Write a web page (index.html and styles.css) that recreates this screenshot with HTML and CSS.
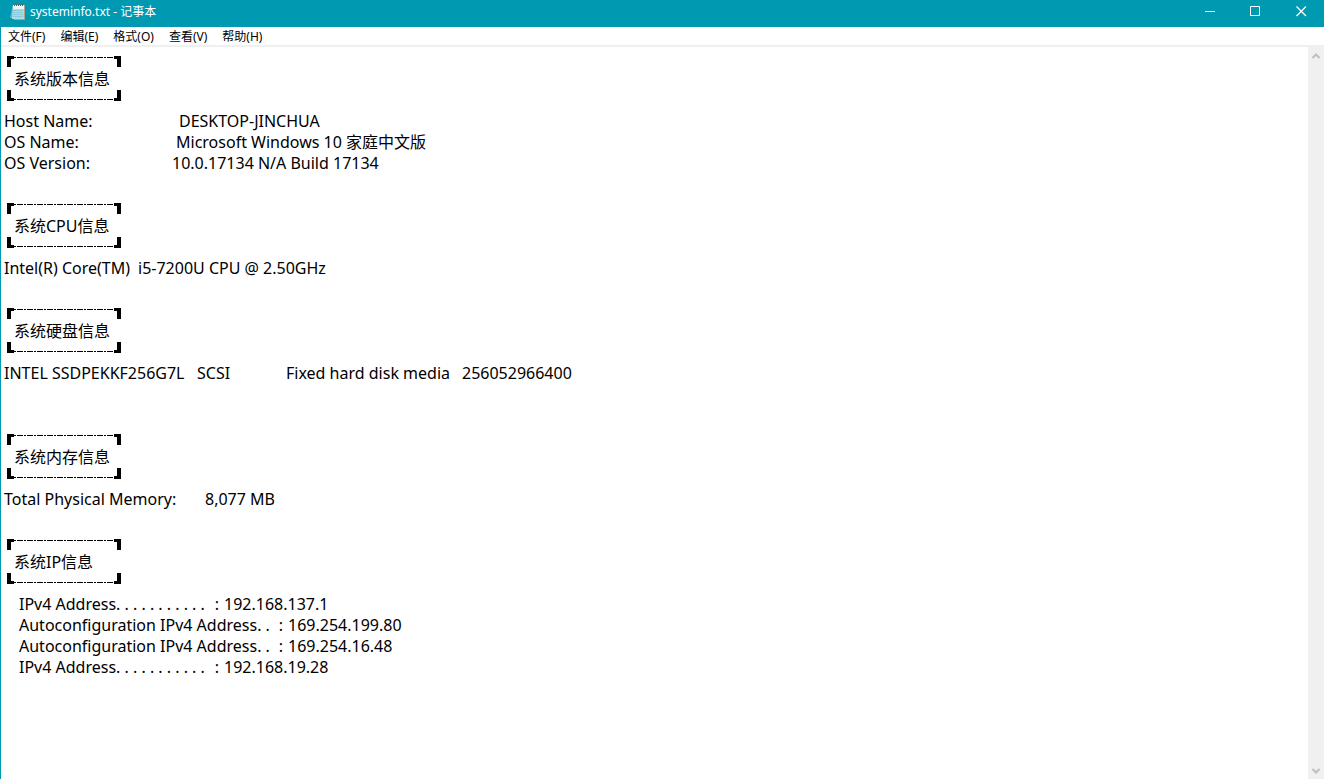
FILE: index.html
```html
<!DOCTYPE html>
<html lang="zh-CN">
<head>
    <meta charset="UTF-8">
    <meta name="viewport" content="width=device-width, initial-scale=1.0">
    <title>systeminfo.txt - 记事本</title>
    <link rel="stylesheet" href="styles.css">
</head>
<body>

    <svg width="0" height="0" class="defs" aria-hidden="true">
        <symbol id="edge" viewBox="0 0 114 11">
            <path d="M0 0h7v3h-3v8h-4zM107 0h7v11h-4v-8h-3z"/>
            <path d="M7 1.5h100" stroke="#000" stroke-dasharray="2 1 6 1" fill="none"/>
        </symbol>
    </svg>

    <div class="window">
        <header class="titlebar">
            <svg class="app-icon" width="18" height="18" viewBox="0 0 18 18" aria-hidden="true">
                <path d="M4 1L1 15h6z" fill="#5fb9cc"/>
                <path d="M15 2h1v15H5v-1h10z" fill="#b3a382"/>
                <path d="M4 2h11v14H3z" fill="#a9dbe9"/>
                <path d="M4 2h11v4H4z" fill="#e9f6fa"/>
                <path d="M4 7.500h10M4 9.500h10M4 11.500h10M4 13.500h10" stroke="#8cc9da"/>
                <path d="M5.500 1v2M7.500 1v2M9.500 1v2M11.500 1v2M13.500 1v2" stroke="#4d6a72"/>
            </svg>
            <h1 class="title">systeminfo.txt - 记事本</h1>
            <div class="controls">
                <button type="button" aria-label="最小化">
                    <svg width="11" height="11" viewBox="0 0 11 11"><path d="M1 5.5h10"/></svg>
                </button>
                <button type="button" aria-label="最大化">
                    <svg width="11" height="11" viewBox="0 0 11 11"><path d="M.5.5h9v9h-9z"/></svg>
                </button>
                <button type="button" aria-label="关闭">
                    <svg width="11" height="11" viewBox="0 0 11 11"><path d="M.5.5l9.500 9.500M10 .5L.5 10" stroke-width="1.300"/></svg>
                </button>
            </div>
        </header>

        <nav class="menu">
            <button type="button">文件(F)</button>
            <button type="button">编辑(E)</button>
            <button type="button">格式(O)</button>
            <button type="button">查看(V)</button>
            <button type="button">帮助(H)</button>
        </nav>

        <div class="editor">
            <main class="text" role="textbox" aria-multiline="true" aria-label="文本编辑器" contenteditable="true" spellcheck="false">
                <section>
                    <div class="frame"><svg><use href="#edge"/></svg><h2>系统版本信息</h2><svg class="bottom"><use href="#edge"/></svg></div>
                    <p><span class="host">Host Name:</span>DESKTOP-JINCHUA</p>
                    <p><span class="os">OS Name:</span>Microsoft Windows 10 家庭中文版</p>
                    <p><span class="version">OS Version:</span>10.0.17134 N/A Build 17134</p>
                </section>
                <section>
                    <div class="frame"><svg><use href="#edge"/></svg><h2>系统CPU信息</h2><svg class="bottom"><use href="#edge"/></svg></div>
                    <p><span class="cpu">Intel(R) Core(TM)</span>i5-7200U CPU @ 2.50GHz</p>
                </section>
                <section class="disk">
                    <div class="frame"><svg><use href="#edge"/></svg><h2>系统硬盘信息</h2><svg class="bottom"><use href="#edge"/></svg></div>
                    <p><span class="model">INTEL SSDPEKKF256G7L</span><span class="bus">SCSI</span><span class="media">Fixed hard disk media</span>256052966400</p>
                </section>
                <section>
                    <div class="frame"><svg><use href="#edge"/></svg><h2>系统内存信息</h2><svg class="bottom"><use href="#edge"/></svg></div>
                    <p><span class="memory">Total Physical Memory:</span>8,077 MB</p>
                </section>
                <section>
                    <div class="frame"><svg><use href="#edge"/></svg><h2>系统IP信息</h2><svg class="bottom"><use href="#edge"/></svg></div>
                    <p class="ip"><span class="ipv4">IPv4 Address. . . . . . . . . . . <span>:</span></span>192.168.137.1</p>
                    <p class="ip"><span class="auto">Autoconfiguration IPv4 Address. . <span>:</span></span>169.254.199.80</p>
                    <p class="ip"><span class="auto">Autoconfiguration IPv4 Address. . <span>:</span></span>169.254.16.48</p>
                    <p class="ip"><span class="ipv4">IPv4 Address. . . . . . . . . . . <span>:</span></span>192.168.19.28</p>
                </section>
            </main>
            <div class="scrollbar">
                <button type="button" aria-label="向上滚动">
                    <svg width="8" height="6" viewBox="0 0 8 6"><path d="M.5 5L4 1.500 7.500 5"/></svg>
                </button>
                <button type="button" aria-label="向下滚动">
                    <svg width="8" height="6" viewBox="0 0 8 6"><path d="M.5 1L4 4.500 7.500 1"/></svg>
                </button>
            </div>
        </div>
    </div>

</body>
</html>
```

FILE: styles.css
```css
* {
    box-sizing: border-box;
}
body {
    margin: 0;
    font-family: "Noto Sans", "Noto Sans CJK SC", sans-serif;
    color: #000;
}
button {
    padding: 0;
    border: none;
    background: none;
    font-family: inherit;
}
.defs {
    position: absolute;
}
.window {
    display: flex;
    flex-direction: column;
    min-height: 100vh;
    border-left: 1px solid #0099b2;
    background-color: #fff;
}
.titlebar {
    display: flex;
    align-items: center;
    height: 27px;
    padding: 0 0 4px 8px;
    background-color: #0099b2;
    color: #fff;
}
.title {
    flex: 1;
    margin: 0 0 0 3px;
    font-size: 12px;
    font-weight: normal;
    line-height: 18px;
}
.controls {
    display: flex;
}
.controls button {
    display: flex;
    align-items: center;
    justify-content: center;
    width: 46px;
    height: 23px;
}
.controls path {
    fill: none;
    stroke: #fff;
}
.menu {
    display: flex;
    gap: 15px;
    height: 20px;
    padding: 0 7px;
    border-bottom: 2px solid #f0f0f0;
}
.menu button {
    font-size: 12px;
    line-height: 20px;
}
.editor {
    display: flex;
    flex: 1;
}
.text {
    flex: 1;
    padding: 1px 3px;
    font-size: 16px;
    line-height: 21px;
    outline: none;
}
.text section {
    margin-bottom: 21px;
}
.text .disk {
    margin-bottom: 42px;
}
.text p {
    display: flex;
    margin: 0;
    white-space: pre;
}
.text .ip {
    padding-left: 15px;
}

.host {
    width: 175px;
}
.os {
    width: 172px;
}
.version {
    width: 168px;
}
.cpu {
    width: 134px;
}
.model {
    width: 193px;
}
.bus {
    width: 89px;
}
.media {
    width: 176px;
}
.memory {
    width: 201px;
}
.ipv4, .auto {
    display: flex;
    justify-content: space-between;
    padding-right: 5px;
}
.ipv4 {
    width: 205px;
}
.auto {
    width: 269px;
}

.frame {
    display: flex;
    flex-direction: column;
    height: 63px;
    padding: 8px 3px 10px;
}
.frame svg {
    width: 114px;
    height: 11px;
}
.frame .bottom {
    transform: scaleY(-1);
}
.frame h2 {
    margin: 2px 7px 0;
    font-size: 16px;
    font-weight: normal;
    line-height: 21px;
}
.scrollbar {
    display: flex;
    flex-direction: column;
    justify-content: space-between;
    width: 16px;
    background-color: #f0f0f0;
}
.scrollbar button {
    display: flex;
    align-items: center;
    justify-content: center;
    height: 17px;
}
.scrollbar path {
    fill: none;
    stroke: #bfbfbf;
    stroke-width: 2;
}
```
